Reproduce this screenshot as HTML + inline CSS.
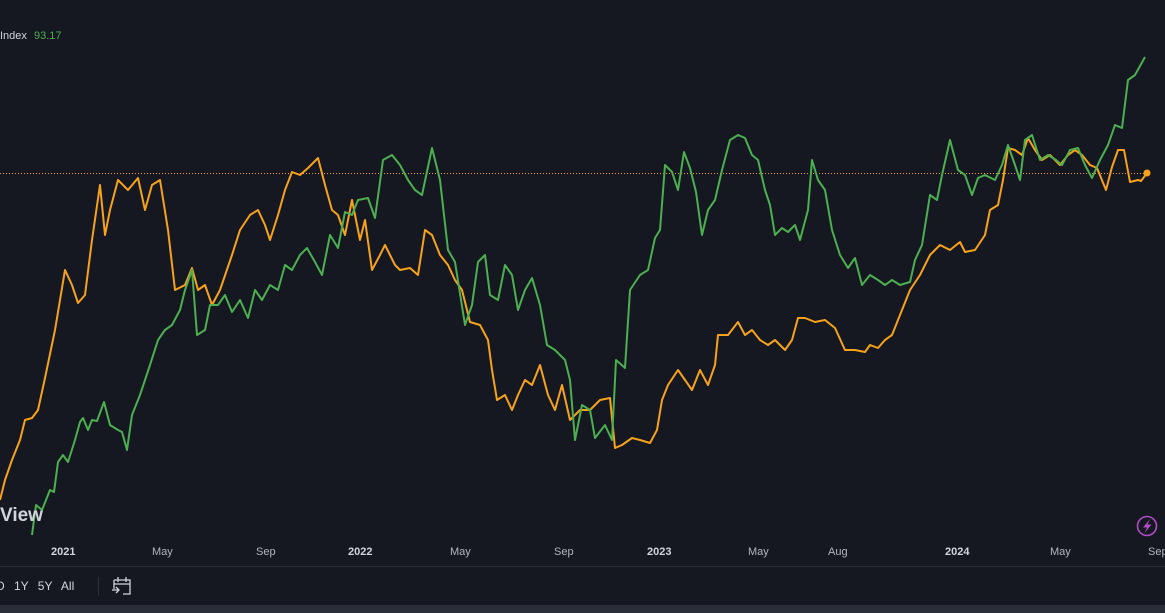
<!DOCTYPE html>
<html><head><meta charset="utf-8"><style>
html,body{margin:0;padding:0;background:#151821;width:1165px;height:613px;overflow:hidden;font-family:"Liberation Sans",sans-serif}
.t{position:absolute;color:#b2b5be;font-size:11px}
</style></head><body>
<svg width="1165" height="613" style="position:absolute;left:0;top:0">
<rect width="1165" height="613" fill="#151821"/>
<line x1="0" y1="173.5" x2="1150" y2="173.5" stroke="#f7a21b" stroke-width="1" stroke-dasharray="1,2"/>
<polyline fill="none" stroke="#f7a21b" stroke-width="2" stroke-linejoin="round" points="0,500 5,480 12,460 20,440 25,420 32,418 38,410 45,378 55,330 65,270 72,285 78,303 85,295 92,240 100,185 105,235 110,210 118,180 128,190 138,178 145,210 152,185 160,180 168,230 175,290 185,285 192,268 198,290 205,285 212,305 220,290 232,255 240,230 250,215 258,210 265,225 270,240 278,215 285,190 292,172 300,175 308,168 318,158 325,185 332,210 338,215 345,235 352,200 360,240 365,220 372,270 380,255 385,245 390,255 395,265 400,270 410,268 418,275 425,230 432,235 440,255 448,265 455,280 462,290 470,322 480,325 488,340 492,370 497,400 505,395 512,410 518,395 525,380 532,385 540,365 548,395 555,410 562,385 570,420 580,410 590,410 600,400 610,398 615,448 622,445 632,438 640,440 650,443 657,430 662,400 668,385 678,370 685,380 692,390 700,370 708,385 715,365 718,335 728,335 738,322 745,335 752,330 760,340 768,345 775,340 785,350 792,340 798,318 805,318 815,322 825,320 835,328 845,350 855,350 865,352 870,345 878,348 885,340 892,335 900,315 910,290 920,275 930,255 940,245 950,250 960,242 965,252 975,250 985,235 990,210 998,205 1003,180 1008,148 1015,150 1022,155 1028,138 1035,150 1042,160 1050,155 1060,165 1068,155 1075,150 1082,155 1090,165 1097,168 1106,190 1112,167 1118,150 1124,150 1130,182 1138,180 1141,181 1147,173"/>
<circle cx="1147" cy="173" r="3.5" fill="#f7a21b"/>
<polyline fill="none" stroke="#4caf50" stroke-width="2" stroke-linejoin="round" points="32,535 36,505 42,510 50,490 54,492 58,462 63,455 68,462 75,440 80,422 83,418 88,430 92,420 97,421 104,402 110,425 118,430 122,432 127,450 132,415 140,395 150,365 158,340 165,330 172,325 180,310 185,290 192,270 197,335 205,330 210,305 218,305 225,295 232,312 240,300 248,318 255,290 262,300 270,285 278,290 285,265 292,270 300,255 307,248 315,262 322,275 330,235 338,248 345,212 352,215 358,200 368,198 375,218 383,160 392,155 400,165 408,180 415,190 422,195 432,148 440,180 448,250 455,262 465,325 472,305 478,262 485,255 490,295 498,300 505,265 512,275 518,310 525,290 532,278 540,305 547,345 555,350 565,360 570,380 575,440 582,405 590,410 595,438 605,425 612,440 616,360 625,368 630,290 640,275 648,270 655,238 660,230 665,165 672,172 678,190 684,152 690,168 696,192 702,235 708,210 715,200 722,170 730,140 738,135 745,138 752,155 758,160 765,190 770,205 775,235 782,228 788,232 795,225 800,240 808,210 812,160 818,180 825,190 832,230 840,255 848,268 855,258 862,285 870,275 878,280 885,285 892,280 900,285 910,282 915,260 922,245 930,195 937,200 942,175 950,140 958,170 965,175 972,195 978,178 985,175 995,180 1002,165 1008,145 1015,165 1020,180 1025,140 1032,135 1040,160 1048,155 1056,160 1062,165 1070,150 1078,148 1085,165 1092,178 1100,160 1108,145 1115,125 1122,128 1128,80 1135,75 1145,57"/>
<line x1="0" y1="566.5" x2="1165" y2="566.5" stroke="#2a2e39"/>
<line x1="98.5" y1="577" x2="98.5" y2="596" stroke="#2a2e39"/>
<rect x="0" y="605" width="1165" height="8" fill="#2a2e39"/>
<circle cx="1147" cy="526" r="9.5" fill="none" stroke="#b14dc8" stroke-width="1.6"/>
<polygon points="1150,519 1143,527.5 1147,527.5 1144.5,533 1151.5,524.5 1147.5,524.5" fill="#b14dc8"/>
<g fill="none" stroke="#d1d4dc" stroke-width="1.3">
<path d="M114,580 h16 v14 h-7 M114,589 v-9 M114,584 h16 M118,577 v5 M126,577 v5 M112,590 h7 M116,587 l3,3 -3,3"/>
</g>
</svg>
<div class="t" style="left:0;top:30px;color:#d1d4dc">Index <span style="color:#4caf50;margin-left:4px">93.17</span></div>
<div style="position:absolute;left:0;top:505px;color:#d1d4dc;font-size:19px;font-weight:bold">View</div>
<div class="t" style="left:51px;top:546px;font-weight:bold;color:#d1d4dc">2021</div>
<div class="t" style="left:152px;top:546px">May</div>
<div class="t" style="left:256px;top:546px">Sep</div>
<div class="t" style="left:348px;top:546px;font-weight:bold;color:#d1d4dc">2022</div>
<div class="t" style="left:450px;top:546px">May</div>
<div class="t" style="left:554px;top:546px">Sep</div>
<div class="t" style="left:647px;top:546px;font-weight:bold;color:#d1d4dc">2023</div>
<div class="t" style="left:748px;top:546px">May</div>
<div class="t" style="left:828px;top:546px">Aug</div>
<div class="t" style="left:945px;top:546px;font-weight:bold;color:#d1d4dc">2024</div>
<div class="t" style="left:1050px;top:546px">May</div>
<div class="t" style="left:1148px;top:546px">Sep</div>
<div class="t" style="left:-4px;top:579px;font-size:12px;color:#d1d4dc;word-spacing:6px">D 1Y 5Y All</div>
</body></html>
